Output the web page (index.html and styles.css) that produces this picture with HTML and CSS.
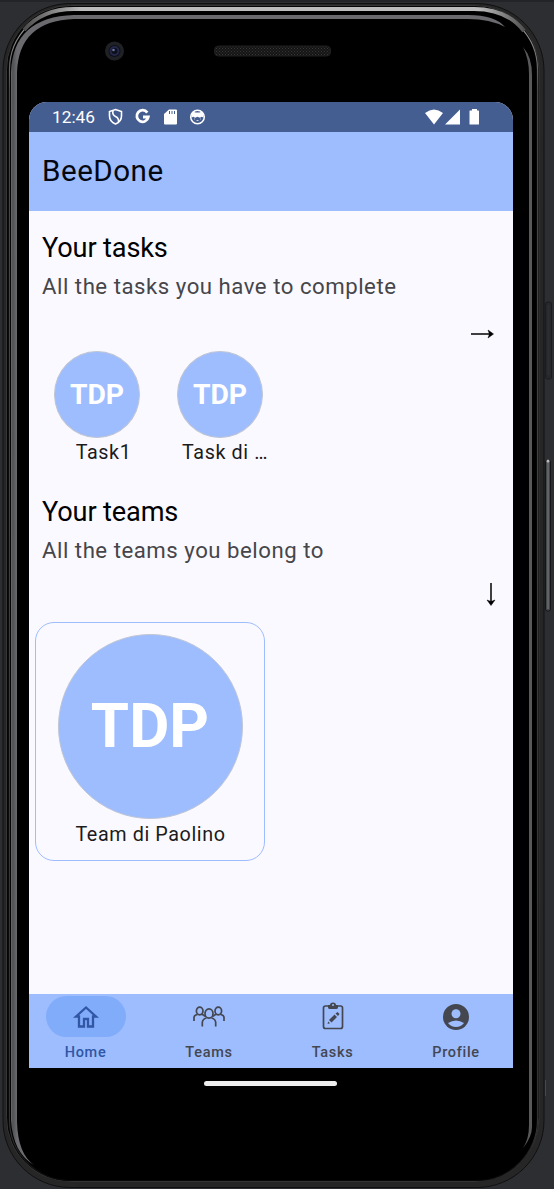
FILE: index.html
```html
<!DOCTYPE html>
<html lang="en">
<head>
<meta charset="utf-8">
<title>BeeDone</title>
<link rel="stylesheet" href="styles.css">
</head>
<body>
<div class="stage">
  <svg class="device" viewBox="0 0 554 1189" aria-hidden="true">
    <defs>
      <linearGradient id="rim" x1="0" y1="0" x2="0" y2="1">
        <stop offset="0" stop-color="#aaa"/><stop offset=".025" stop-color="#888"/><stop offset=".07" stop-color="#48494a"/><stop offset=".96" stop-color="#303132"/><stop offset="1" stop-color="#080808"/>
      </linearGradient>
      <linearGradient id="shine" gradientUnits="userSpaceOnUse" x1="20" y1="0" x2="530" y2="0">
        <stop offset="0" stop-color="#444"/><stop offset=".12" stop-color="#bcbcbc"/><stop offset=".9" stop-color="#bcbcbc"/><stop offset="1" stop-color="#444"/>
      </linearGradient>
      <linearGradient id="leftEdge" gradientUnits="userSpaceOnUse" x1="10" y1="0" x2="17" y2="0">
        <stop offset="0" stop-color="#77777a"/><stop offset=".4" stop-color="#505154"/><stop offset="1" stop-color="#6b6b6f"/>
      </linearGradient>
      <pattern id="mesh" width="3" height="3" patternUnits="userSpaceOnUse">
        <rect width="3" height="3" fill="#141414"/><path d="M0 0h1v1H0zM1.500 1.500h1v1h-1z" fill="#383838"/>
      </pattern>
    </defs>
    <path d="M0 1h554" stroke="#191a1c"/>
    <rect x="3" y="3.500" width="541" height="1184" rx="67" fill="#252625" stroke="#101010"/>
    <rect x="6.500" y="5.500" width="532.500" height="1176" rx="64" fill="#050505" stroke="#343534"/>
    <rect x="9.500" y="8.500" width="528" height="1172" rx="61" fill="#000" stroke="url(#rim)" stroke-width="1.200"/>
    <path d="M24 30Q42 9 74 9H474Q507 9 524 31" fill="none" stroke="url(#shine)" stroke-width="4"/>
    <path d="M11 1120V72Q13 17 74 15H468Q495 15 505 27Q490 19 468 19H74Q19 21 17 72V1122Q18 1154 34 1165Q13 1153 11 1120Z" fill="url(#leftEdge)"/>
    <path d="M523 47Q532 57 532 75V1127Q532 1137 523 1148Q529 1139 529 1125V74Q529 59 523 47Z" fill="#59595b"/>
    <path d="M78 1184.500H480" stroke="#252525" stroke-width="4"/>
    <circle cx="114.500" cy="51" r="9.500" fill="#202124"/><circle cx="114.500" cy="51" r="6" fill="#0d0e1b"/><circle cx="114.500" cy="51" r="4" fill="none" stroke="#252747" stroke-width="2"/><circle cx="113.500" cy="50" r="1.300" fill="#6677a6"/>
    <rect x="214.500" y="46" width="116" height="10" rx="4" fill="url(#mesh)" stroke="#202020"/>
    <rect x="545.500" y="302" width="6" height="77" rx="2" fill="#24282c" stroke="#1b1c1d"/><path d="M548.500 305v70" stroke="#302d2f" stroke-width="2"/>
    <rect x="545.500" y="460" width="5" height="151" rx="2" fill="#44474a" stroke="#151617"/><path d="M548 462v147" stroke="#606264" stroke-width="2"/><circle cx="548" cy="461" r="1.500" fill="#bbb"/>
    <path d="M545.500 1080v16" stroke="#47484a"/>
  </svg>
  <main class="screen">
    <div class="status">
      <span class="time">12:46</span>
      <svg class="status-left" viewBox="0 0 100 18" fill="none" stroke="#fff">
        <path d="M8.500 1.500 14.500 3.500V8Q14.500 13.500 8.500 16Q2.500 13.500 2.500 8V3.500Z" stroke-width="1.600"/><path d="M6 2.500Q5 7 8.500 8.500T11.500 14" stroke-width="1.600"/>
        <path d="M40.300 4.600A5.800 5.800 0 1 0 41.300 9H36" stroke-width="2.800"/>
        <path d="M62 1.500h7q1 0 1 1v13q0 1-1 1h-11q-1 0-1-1V6Z" fill="#fff" stroke="none"/><path d="M62.500 3v3M65 3v3M67.500 3v3" stroke="#455e91"/>
        <circle cx="90.500" cy="9" r="6.800" stroke-width="1.500"/><path d="M84.500 6 86.500 3.800 88.500 4.500h4l2-.7L96.500 6v3.500l-2-.8-1.500 1-2.500-1-2.500 1-1.500-1-2 .8Z" fill="#fff" stroke="none"/><path d="M87 11h.8M93.200 11h.8M89.500 12.500h2" stroke-width=".7"/>
      </svg>
      <svg class="status-right" viewBox="0 0 56 16" fill="#fff"><path d="M0 4Q9-3 18 4L9 15.500ZM35 .5V15.500H20ZM47 1.500V0h5v1.500h1.500q.5 0 .5.500v13q0 .5-.5.500h-8.500q-.5 0-.5-.5v-13q0-.5.500-.5Z"/></svg>
    </div>
    <header class="appbar">BeeDone</header>
    <div class="content">
      <section class="tasks">
        <h2>Your tasks</h2>
        <p class="sub">All the tasks you have to complete</p>
        <div class="arrow-row"><svg class="arrow-right" viewBox="0 0 24 12"><path d="M1 6H22"/><path class="head" d="M18 2 23.500 6 18 10 19.500 6Z"/></svg></div>
        <div class="task-list">
          <div class="task"><div class="avatar">TDP</div><span class="label first">Task1</span></div>
          <div class="task"><div class="avatar">TDP</div><span class="label second">Task di …</span></div>
        </div>
      </section>
      <section class="teams">
        <h2>Your teams</h2>
        <p class="sub">All the teams you belong to</p>
        <div class="arrow-row down"><svg class="arrow-down" viewBox="0 0 12 24"><path d="M6 1V22"/><path class="head" d="M2 18 6 23.500 10 18 6 19.500Z"/></svg></div>
        <div class="card"><div class="avatar large">TDP</div><span class="label">Team di Paolino</span></div>
      </section>
    </div>
    <nav class="nav">
      <div class="item active"><span class="pill"><svg viewBox="0 0 26 24"><path d="M13 2.500 3 11.500H6V21.500H11V14H15V21.500H20V11.500H23Z" fill="none" stroke="currentColor" stroke-width="2.300"/></svg></span><b>Home</b></div>
      <div class="item"><span class="pill"><svg class="people" viewBox="0 0 32 22" fill="none" stroke="currentColor" stroke-width="1.700"><ellipse cx="6.700" cy="5" rx="3.300" ry="3.800"/><ellipse cx="25.300" cy="5" rx="3.300" ry="3.800"/><ellipse cx="16" cy="7.500" rx="4" ry="4.700"/><path d="M1 15V11.500Q1 9 4.500 8.500M31 15V11.500Q31 9 27.500 8.500M8.500 8.500Q11 8.500 12 10.500M23.500 8.500Q21 8.500 20 10.500M9.300 20.500V16.500Q9.500 13 13.500 12M22.700 20.500V16.500Q22.500 13 18.500 12"/></svg></span><b>Teams</b></div>
      <div class="item"><span class="pill"><svg class="clip" viewBox="0 0 24 30"><rect x="2.500" y="5" width="19" height="22.500" rx="2" fill="none" stroke="currentColor" stroke-width="1.700"/><path d="M7 4H9Q9 1.500 12 1.500T15 4H17V6.500Q17 8 15 8H9Q7 8 7 6.500Z" fill="currentColor"/><circle cx="12" cy="4" r="1" fill="#9dbdff"/><path d="m8 19 5.500-5.500 2.500 2.500-5.500 5.500ZM14.500 12.500 16.500 11l2 2L17 15ZM6.500 23 7.300 20.500 9 22.200Z" fill="currentColor"/></svg></span><b>Tasks</b></div>
      <div class="item"><span class="pill"><svg viewBox="0 0 26 26"><circle cx="13" cy="13" r="13" fill="currentColor"/><circle cx="13" cy="9.800" r="4.500" fill="#9dbdff"/><path d="M5 19Q13 13.800 21 19Q18 23 13 23T5 19Z" fill="#9dbdff"/></svg></span><b>Profile</b></div>
    </nav>
  </main>
  <div class="home-bar"></div>
</div>
</body>
</html>
```
FILE: styles.css
```css
* { box-sizing: border-box; }
body { margin: 0; background: #2d2e32; font-family: Roboto, sans-serif; }
.stage { position: relative; width: 554px; height: 1189px; padding: 102px 41px 0 29px; overflow: hidden; }
.device { position: absolute; inset: 0; width: 554px; height: 1189px; }
.screen { position: relative; display: flex; flex-direction: column; height: 966px; overflow: hidden; background: #faf9ff; border-radius: 18px 18px 0 0; }
.status { display: flex; align-items: center; height: 30px; padding: 0 32px 0 23px; background: #455e91; color: #fff; }
.time { width: 55px; font-size: 17.3px; line-height: 20px; }
.status-left { width: 100px; height: 18px; }
.status-right { width: 56px; height: 16px; margin-left: auto; }
.appbar { height: 78.500px; padding-left: 13px; background: #9dbdff; color: #050710; font-size: 29.6px; line-height: 78px; letter-spacing: .5px; }
.content { flex: 1; }
.tasks { height: 265px; padding-top: 17px; }
.teams { padding-top: 16px; }
h2 { margin: 0 0 0 13px; color: #000; font-size: 27.150px; font-weight: 400; line-height: 40px; letter-spacing: -.15px; }
.sub { margin: 0 0 0 13px; color: #46464a; font-size: 22.200px; line-height: 37px; letter-spacing: .52px; }
.arrow-row { display: flex; justify-content: flex-end; height: 46px; padding: 23px 19px 0 0; }
.arrow-right { width: 24px; height: 12px; }
.arrow-down { width: 12px; height: 24px; }
.arrow-right path, .arrow-down path { fill: none; stroke: #000; stroke-width: 1.500; }
.arrow-right .head, .arrow-down .head { fill: #000; stroke-width: .5; }
.down { height: 53px; padding: 13px 16px 0 0; }
.task-list { display: flex; gap: 37px; padding-left: 25px; }
.task { display: flex; flex-direction: column; align-items: center; width: 86px; }
.avatar { display: flex; align-items: center; justify-content: center; width: 86px; height: 87px; border: 1px solid #bfc5d4; border-radius: 50%; background: #9dbdff; color: #fff; font-size: 28.300px; font-weight: 700; }
.label { color: #1b1b20; font-size: 19.750px; line-height: 30px; letter-spacing: .6px; white-space: nowrap; }
.first { margin-left: 13px; }
.second { margin-left: 10px; }
.card { display: flex; flex-direction: column; align-items: center; width: 230px; height: 239px; margin-left: 6px; padding-top: 11px; border: 1.200px solid #9dbdff; border-radius: 19px; }
.card .label { margin-left: 1px; line-height: 32px; }
.large { width: 185px; height: 185px; font-size: 61.800px; }
.nav { display: flex; height: 74px; padding: 2px 0 0; background: #9dbdff; color: #44474f; }
.item { display: flex; flex-direction: column; align-items: center; width: 80px; margin-left: 43.500px; }
.item:first-child { margin-left: 16.500px; }
.pill { display: flex; align-items: center; justify-content: center; width: 80px; height: 41px; border-radius: 21px; }
.pill svg { width: 26px; height: 26px; }
.pill .people { width: 32px; height: 22px; }
.pill .clip { width: 24px; height: 30px; margin-top: -2px; }
.item b { margin-top: 6px; font-size: 14.500px; font-weight: 500; line-height: 20px; letter-spacing: .7px; }
.active { color: #3056a4; }
.active .pill { background: #81acfa; }
.home-bar { position: relative; width: 133px; height: 5px; margin: 13px 0 0 175px; border-radius: 3px; background: #eee; }
```
